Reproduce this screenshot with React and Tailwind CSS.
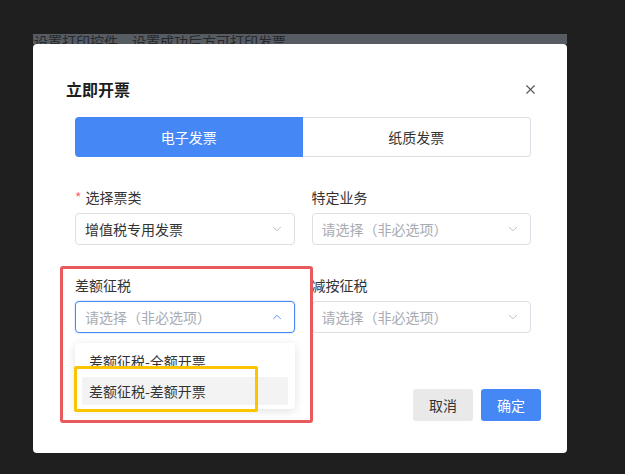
import { X, ChevronDown, ChevronUp } from 'lucide-react'

const FONT = { fontFamily: '"Noto Sans CJK SC", "Noto Sans", sans-serif' }

function Select({ value, placeholder, focused }) {
  return (
    <div
      className={
        'flex h-[32px] items-center justify-between rounded-[4px] border bg-white pl-[9px] pr-[10px] text-[14px] ' +
        (focused ? 'border-[#4a8af4] shadow-[0_0_0_1px_rgba(74,138,244,0.15)]' : 'border-[#dcdfe6]')
      }
    >
      <span className={value ? 'text-[#333]' : 'text-[#a8abb2]'}>{value || placeholder}</span>
      {focused ? (
        <ChevronUp className="size-[14px] text-[#4a8af4]" strokeWidth={1.6} />
      ) : (
        <ChevronDown className="size-[14px] text-[#b5b8be]" strokeWidth={1.6} />
      )}
    </div>
  )
}

function Field({ label, required, children }) {
  return (
    <div>
      <div className="mb-[6px] h-[20px] text-[14px] leading-[20px] text-[#333]">
        {required && <span className="mr-[4px] text-[#f56c6c]">*</span>}
        {label}
      </div>
      {children}
    </div>
  )
}

export default function App() {
  return (
    <div className="h-[474px] w-[625px] overflow-hidden bg-[#1f1f1f] pt-[34px]" style={FONT}>
      {/* page text behind the mask */}
      <div className="ml-[33px] h-[10px] w-[534px] overflow-hidden bg-[#575b62]">
        <p className="-ml-[13px] -mt-[1px] whitespace-nowrap text-[14px] leading-[16px] text-[#25282c]">
          请设置打印控件，设置成功后方可打印发票。
        </p>
      </div>

      {/* dialog */}
      <div className="relative ml-[33px] h-[409px] w-[534px] rounded-[4px] bg-white">
        <div className="flex items-center justify-between pl-[33px] pr-[29px] pt-[33px]">
          <h2 className="text-[16px] font-bold leading-[24px] text-[#1d1d1d]">立即开票</h2>
          <X className="size-[15px] text-[#555]" strokeWidth={1.8} />
        </div>

        <div className="mt-[16px] pl-[42px] pr-[36px]">
          <div className="flex h-[40px] text-[14px]">
            <div className="flex flex-1 items-center justify-center rounded-l-[4px] bg-[#4587f5] text-white">
              电子发票
            </div>
            <div className="flex flex-1 items-center justify-center rounded-r-[4px] border border-l-0 border-[#dcdfe6] text-[#333]">
              纸质发票
            </div>
          </div>

          <div className="mt-[30px] grid grid-cols-2 gap-x-[17px] gap-y-[30px]">
            <Field label="选择票类" required>
              <Select value="增值税专用发票" />
            </Field>
            <Field label="特定业务">
              <Select placeholder="请选择（非必选项）" />
            </Field>
            <div className="relative">
              <Field label="差额征税">
                <Select placeholder="请选择（非必选项）" focused />
              </Field>
              {/* dropdown */}
              <div className="absolute left-0 right-0 top-[68px] z-10 rounded-[4px] bg-white px-[7px] py-[4px] shadow-[0_2px_10px_rgba(0,0,0,0.12)]">
                <div className="flex h-[28px] items-center pl-[7px] text-[14px] text-[#333]">差额征税-全额开票</div>
                <div className="mt-[2px] flex h-[28px] items-center rounded-[2px] bg-[#f3f3f4] pl-[7px] text-[14px] text-[#333]">
                  差额征税-差额开票
                </div>
              </div>
            </div>
            <Field label="减按征税">
              <Select placeholder="请选择（非必选项）" />
            </Field>
          </div>
        </div>

        <div className="mt-[56px] flex justify-end gap-[8px] pr-[26px]">
          <button className="h-[32px] w-[60px] rounded-[3px] bg-[#e9e9e9] text-[14px] text-[#333]">取消</button>
          <button className="h-[32px] w-[60px] rounded-[3px] bg-[#4587f5] text-[14px] text-white">确定</button>
        </div>

        {/* annotations */}
        <div className="pointer-events-none absolute left-[27px] top-[222px] z-20 h-[157px] w-[253px] rounded-[3px] border-[3px] border-[#e95a5d]" />
        <div className="pointer-events-none absolute left-[41px] top-[322px] z-20 h-[46px] w-[184px] rounded-[2px] border-[3px] border-[#fbc400]" />
      </div>
    </div>
  )
}
